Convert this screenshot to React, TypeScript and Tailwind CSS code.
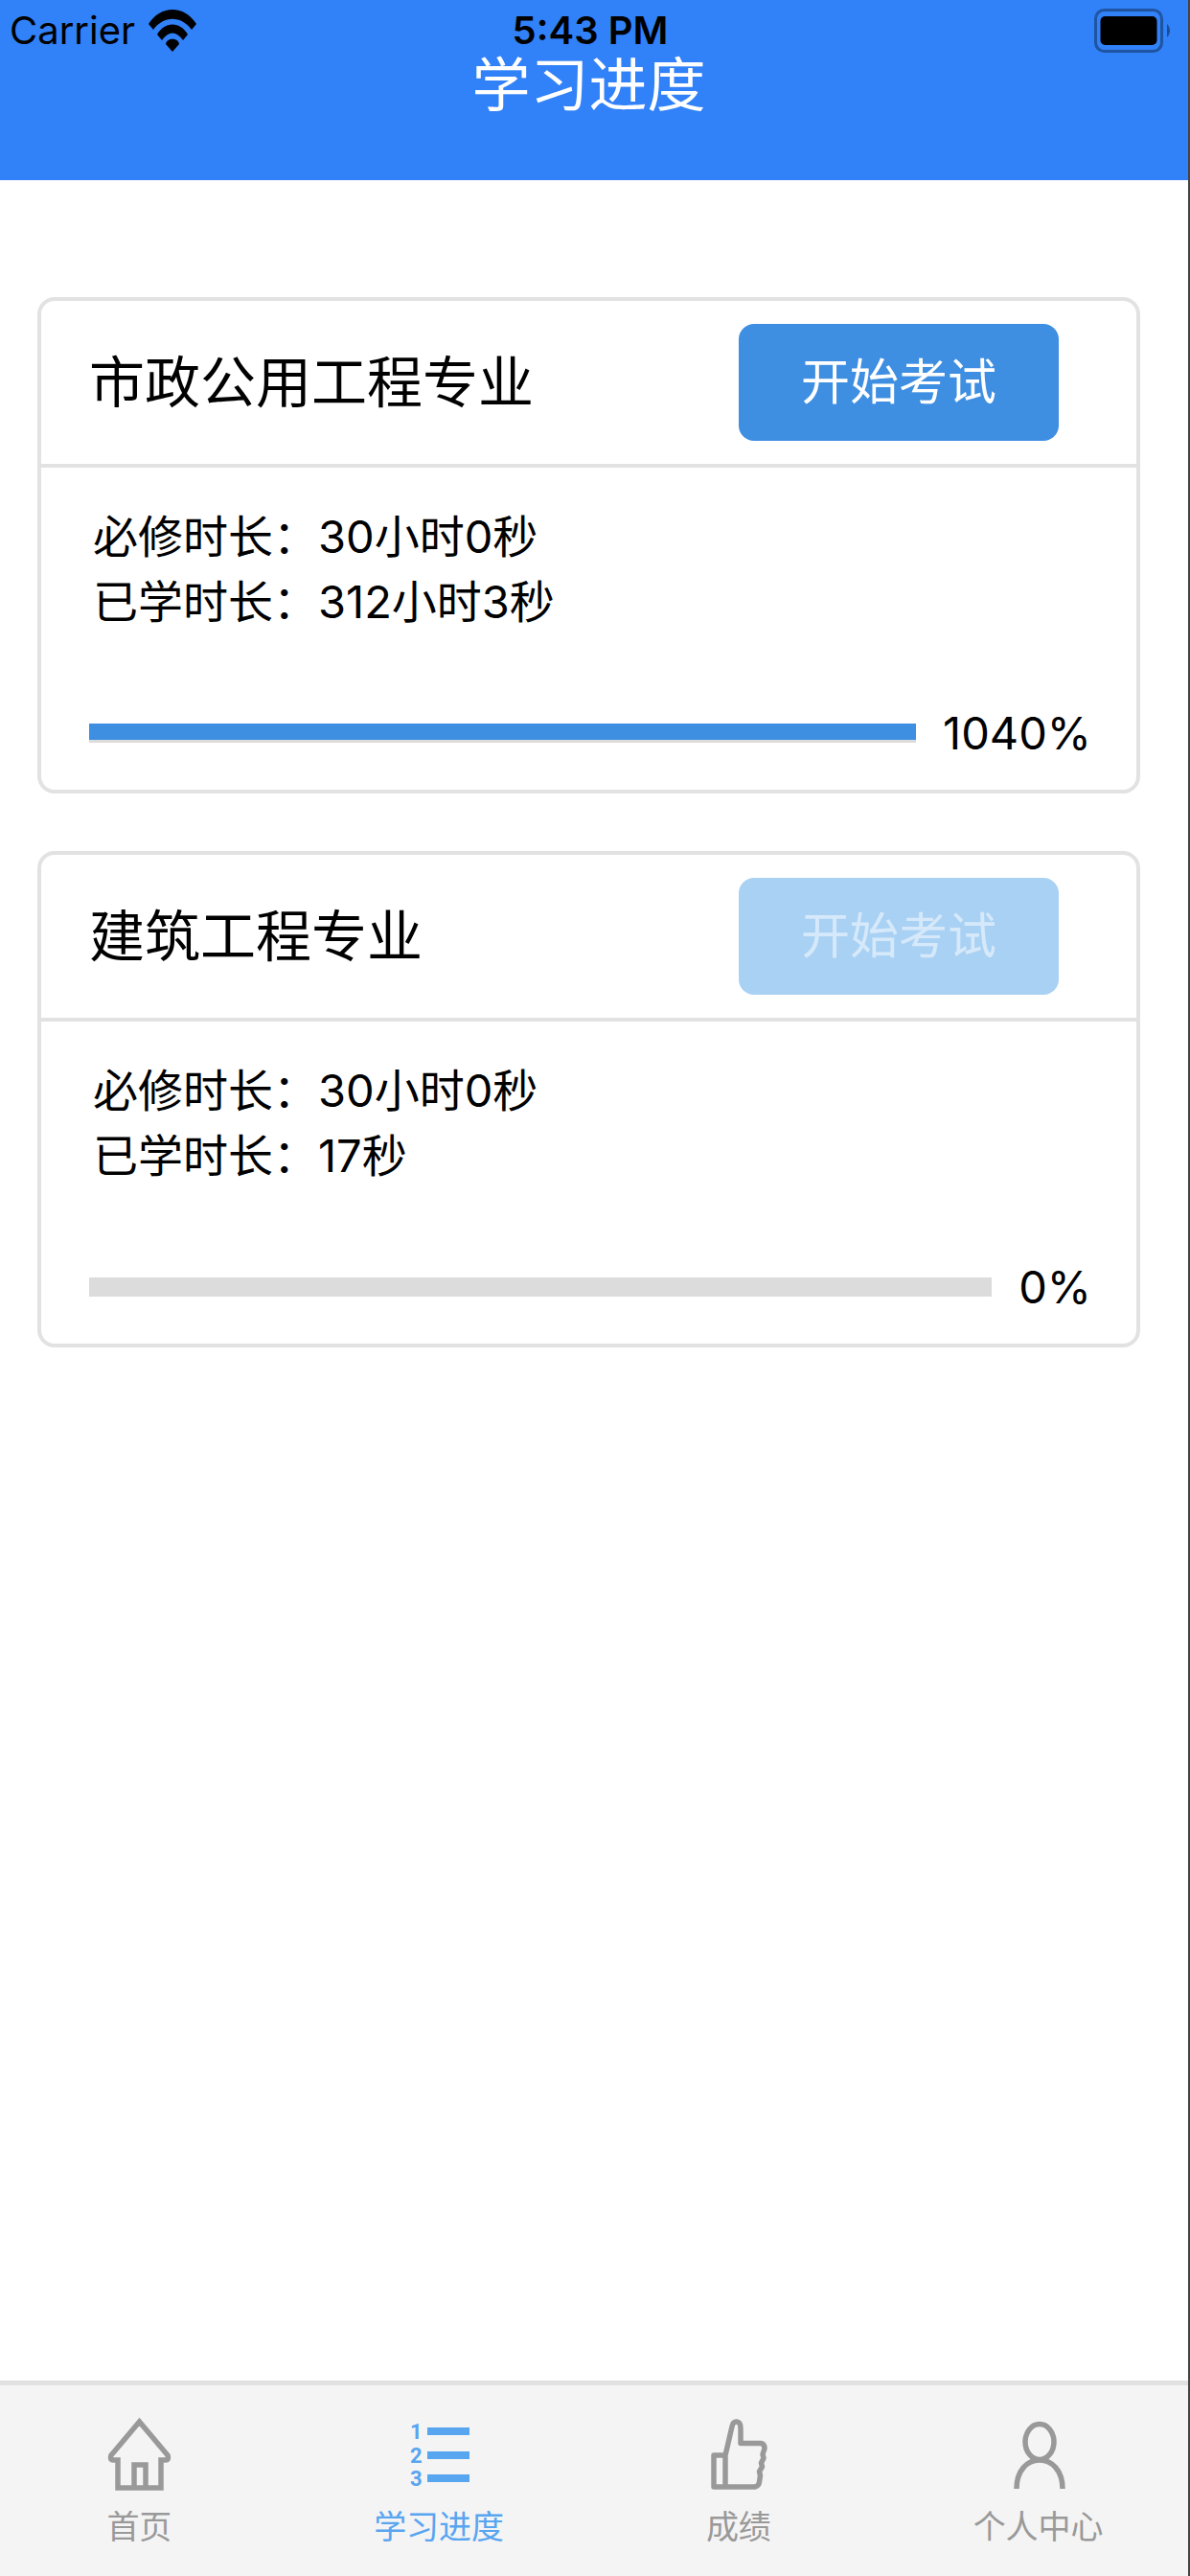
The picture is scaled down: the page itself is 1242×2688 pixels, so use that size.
import React from 'react';

type Course = {
  name: string;
  required: string;
  learned: string;
  percent: number;
};

const courses: Course[] = [
  { name: '市政公用工程专业', required: '30小时0秒', learned: '312小时3秒', percent: 1040 },
  { name: '建筑工程专业', required: '30小时0秒', learned: '17秒', percent: 0 },
];

const WifiIcon = () => (
  <svg width="50" height="44" viewBox="0 0 50 44" aria-hidden="true">
    <path d="M0 15 C13 -5 37 -5 50 15 L45 21 C34 6 16 6 5 21 Z" />
    <path d="M9 26 C17 12 33 12 41 26 L36 32 C29 22 21 22 14 32 Z" />
    <path d="M18 36 C19 29 31 29 32 36 L25 44 Z" />
  </svg>
);

const BatteryIcon = () => (
  <svg width="80" height="46" viewBox="0 0 80 46" aria-hidden="true">
    <rect x="1.5" y="1.5" width="69" height="43" rx="9" fill="none" stroke="#000" strokeOpacity="0.35" strokeWidth="3" />
    <rect x="6.5" y="8" width="59" height="30" rx="5" />
    <path d="M76 16 C80 20 80 26 76 30 Z" fillOpacity="0.4" />
  </svg>
);

const HomeIcon = () => (
  <svg width="80" height="80" viewBox="0 0 80 80" fill="none" stroke="currentColor" strokeWidth="5.5" aria-hidden="true">
    <path d="M40.5 6 L11 41 Q9.5 46 13 46 H18 V75 H63 V46 H68 Q71.5 46 70 41 Z" />
    <path d="M35 75 V51 H47 V75" />
  </svg>
);

const ListIcon = () => (
  <svg width="80" height="80" viewBox="0 0 80 80" fill="currentColor" aria-hidden="true">
    <g className="font-['Liberation_Sans_Narrow',Roboto,sans-serif] text-[22px] font-bold">
      <text x="10" y="24">1</text>
      <text x="10" y="49">2</text>
      <text x="10" y="73">3</text>
    </g>
    <rect x="28" y="12" width="44" height="8" />
    <rect x="28" y="37" width="44" height="8" />
    <rect x="28" y="61" width="44" height="8" />
  </svg>
);

const ThumbIcon = () => (
  <svg width="80" height="80" viewBox="0 0 80 80" fill="none" stroke="currentColor" strokeWidth="5.5" strokeLinejoin="round" aria-hidden="true">
    <path d="M26 41 H14 V74 H57 Q61 73 61.5 69 L62.5 62 L61.5 58 L64.5 53 L63.5 49 L66 44 L65 40 L67 34 Q67 29 63 28.5 H42 V13 C42 4 34 4 33 11 C30 24 28 33 26 41 V74" />
  </svg>
);

const UserIcon = () => (
  <svg width="80" height="80" viewBox="0 0 80 80" fill="none" stroke="currentColor" strokeWidth="5.5" aria-hidden="true">
    <ellipse cx="41" cy="27" rx="15" ry="18.5" />
    <path d="M17 76 C17 57 28 46 41 46 C54 46 65 57 65 76" />
  </svg>
);

const tabs = [
  { label: '首页', icon: HomeIcon, active: false },
  { label: '学习进度', icon: ListIcon, active: true },
  { label: '成绩', icon: ThumbIcon, active: false },
  { label: '个人中心', icon: UserIcon, active: false },
];

const CourseCard = ({ name, required, learned, percent }: Course) => (
  <section className="rounded-[18px] border-4 border-[#e2e2e2]">
    <div className="flex h-[174px] items-center justify-between border-b-4 border-[#e2e2e2] pl-[50px] pr-[81px]">
      <h2 className="text-[58px] leading-[68px]">{name}</h2>
      <button
        type="button"
        disabled={percent < 100}
        className="h-[122px] w-[334px] rounded-2xl bg-[#3e8ee2] text-[51px] text-white disabled:bg-[#a9d1f3] disabled:text-[#d6e9fa]"
      >
        开始考试
      </button>
    </div>
    <div className="pb-[25px] pl-[50px] pr-[47px] pt-[38px] text-[47px] leading-[68px]">
      <p className="pl-1">必修时长：{required}</p>
      <p className="pl-1">已学时长：{learned}</p>
      <div className="mt-[69px] flex items-center gap-7">
        <div
          role="progressbar"
          aria-label={name}
          aria-valuenow={Math.min(percent, 100)}
          className="h-5 flex-1 bg-[#dcdcdc]"
        >
          <div className="h-[17px] bg-[#3e8ee2]" style={{ width: `${Math.min(percent, 100)}%` }} />
        </div>
        <span>{percent}%</span>
      </div>
    </div>
  </section>
);

const App = () => {
  return (
    <div className="overflow-hidden border-r-2 border-[#444] bg-white font-[Inter,'Noto_Sans_CJK_SC',sans-serif] text-black">
      <div className="-ml-[11px] flex min-h-screen flex-col">
        <header className="bg-[#3181f8] pb-[74px]">
          {/* Status bar */}
          <div className="grid h-16 grid-cols-3 items-center pl-[21px] pr-[18px] text-[40px]">
            <div className="flex items-center gap-3.5">
              <span>Carrier</span>
              <WifiIcon />
            </div>
            <span className="text-center font-semibold">5:43 PM</span>
            <div className="flex justify-end">
              <BatteryIcon />
            </div>
          </div>
          <h1 className="text-center text-[61px] leading-[50px] text-white">学习进度</h1>
        </header>

        <main className="flex flex-1 flex-col gap-[60px] px-[50px] pt-[122px]">
          {courses.map((course) => (
            <CourseCard key={course.name} {...course} />
          ))}
        </main>

        {/* Bottom tabs */}
        <nav className="grid grid-cols-4 border-t-[5px] border-[#e1e1e1] bg-[#f4f4f4] pb-[31px] pt-8">
          {tabs.map(({ label, icon: Icon, active }) => (
            <a
              key={label}
              href="#"
              className={`flex flex-col items-center gap-4 text-[34px] leading-10 ${active ? 'text-[#58a5f0]' : 'text-[#999]'}`}
            >
              <Icon />
              <span>{label}</span>
            </a>
          ))}
        </nav>
      </div>
    </div>
  );
};

export default App;
